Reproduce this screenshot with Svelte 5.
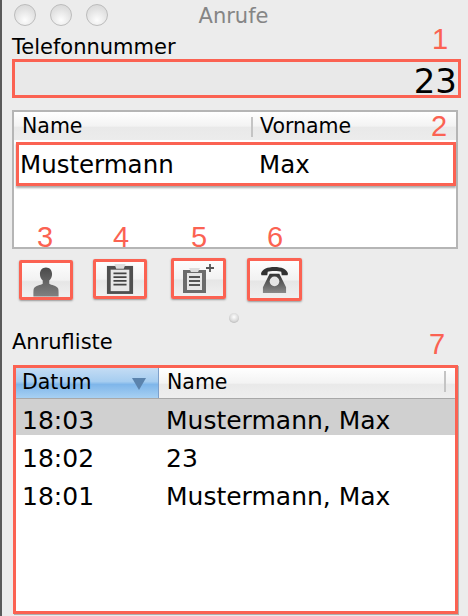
<script>
  const calls = [
    { time: '18:03', name: 'Mustermann, Max', selected: true },
    { time: '18:02', name: '23' },
    { time: '18:01', name: 'Mustermann, Max' }
  ];
</script>

<div class="window">
  <div class="titlebar">
    <div class="lights"><span></span><span></span><span></span></div>
    <div class="title">Anrufe</div>
  </div>

  <div class="label phone-label">Telefonnummer <span class="mark m1">1</span></div>
  <div class="phone">23</div>

  <div class="contacts">
    <div class="head">
      <div class="col-name">Name</div>
      <div class="col-first">Vorname</div>
      <span class="mark m2">2</span>
    </div>
    <div class="contact-row"><span class="cell-name">Mustermann</span><span>Max</span></div>
    <span class="mark m3">3</span>
    <span class="mark m4">4</span>
    <span class="mark m5">5</span>
    <span class="mark m6">6</span>
  </div>

  <div class="tools">
    <button class="b3" aria-label="Kontakt">
      <svg width="28" height="31" viewBox="0 0 30 32">
        <defs>
          <linearGradient id="g1" x1="0" y1="0" x2="0" y2="1"><stop offset="0" stop-color="#4a4a4a"/><stop offset="1" stop-color="#808080"/></linearGradient>
        </defs>
        <path d="M15 1c4 0 6.500 3 6.500 7 0 3-1.200 5.500-3 7v3.500c2 1.500 8 2 9.500 5 .6 1.500.5 5 .5 8.500H1.500c0-3.500-.1-7 .5-8.500 1.500-3 7.500-3.500 9.500-5V15c-1.800-1.500-3-4-3-7 0-4 2.500-7 6.500-7z" fill="url(#g1)"/>
      </svg>
    </button>
    <button class="b4" aria-label="Notiz">
      <svg width="28" height="32" viewBox="0 0 30 32">
        <rect x="1" y="2" width="28" height="30" fill="#4f4f4f"/>
        <path d="M9 0h12l-2 5h-8z" fill="#ddd"/>
        <rect x="5" y="6" width="20" height="23" fill="#e8e8e8"/>
        <path d="M8 10h14M8 14h14M8 18h14M8 22h14" stroke="#444" stroke-width="2"/>
      </svg>
    </button>
    <button class="b5" aria-label="Neue Notiz">
      <svg width="34" height="30" viewBox="0 0 34 30">
        <rect x="1" y="7" width="23" height="23" fill="#6b6b6b"/>
        <path d="M7 5h11l-2 4H9z" fill="#ddd"/>
        <rect x="5" y="10" width="15" height="17" fill="#e6e6e6"/>
        <path d="M7 14h11M7 18h11M7 22h11" stroke="#555" stroke-width="2"/>
        <path d="M28 1v8M24 5h8" stroke="#555" stroke-width="1.800"/>
      </svg>
    </button>
    <button class="b6" aria-label="Anrufen">
      <svg width="29" height="27" viewBox="0 0 30 28">
        <defs>
          <linearGradient id="g2" x1="0" y1="0" x2="0" y2="1"><stop offset="0" stop-color="#333"/><stop offset="1" stop-color="#8a8a8a"/></linearGradient>
        </defs>
        <path d="M1 8C2 3 8 1 15 1s13 2 14 7l-.5 1.500h-6L22 6c-2-1-12-1-14 0l-.5 3.500h-6z" fill="#333"/>
        <path d="M10 8h10l2 4 5 10v6H3v-6l5-10z" fill="url(#g2)"/>
        <circle cx="15" cy="16" r="5" fill="#e4e4e4"/>
      </svg>
    </button>
  </div>

  <div class="splitter"><span></span></div>

  <div class="label list-label">Anrufliste <span class="mark m7">7</span></div>

  <div class="calls">
    <div class="calls-head">
      <div class="sorted">Datum<i></i></div>
      <div class="calls-name">Name</div>
    </div>
    {#each calls as call}
      <div class="call" class:selected={call.selected}>
        <span class="time">{call.time}</span>
        <span>{call.name}</span>
      </div>
    {/each}
  </div>
</div>

<style>
  :global(body) {
    margin: 0;
    background: #ececec;
  }

  .window {
    width: 466px;
    height: 616px;
    box-sizing: border-box;
    border-left: 2px solid #5a5a5a;
    background: #ececec;
    font-family: "DejaVu Sans", sans-serif;
    color: #000;
    overflow: hidden;
    position: relative;
  }

  .titlebar {
    height: 33px;
    position: relative;
    display: flex;
    align-items: center;
    justify-content: center;
  }

  .lights {
    position: absolute;
    left: 12px;
    top: 4px;
    display: flex;
    gap: 14px;
  }

  .lights span {
    width: 20px;
    height: 20px;
    border-radius: 50%;
    border: 1px solid #bcbcbc;
    background: radial-gradient(circle at 50% 75%, #fdfdfd, #e2e2e2 60%, #d4d4d4);
  }

  .title {
    color: #858585;
    font-size: 21px;
    margin-left: -1px;
    margin-top: -1px;
  }

  .label {
    font-size: 21px;
    line-height: 20px;
    margin-left: 10px;
    position: relative;
  }

  .phone-label {
    margin-top: 4px;
  }

  .mark {
    position: absolute;
    color: #fb6252;
    font-family: "Liberation Sans", sans-serif;
    font-size: 29px;
    line-height: 28px;
  }

  .m1 { left: 420px; top: -12px; }
  .m2 { left: 417px; top: 0; }
  .m3 { left: 23px; top: 111px; }
  .m4 { left: 99px; top: 111px; }
  .m5 { left: 177px; top: 111px; }
  .m6 { left: 253px; top: 111px; }
  .m7 { left: 417px; top: -2px; }

  .phone {
    margin: 2px 0 0 10px;
    width: 449px;
    height: 39px;
    box-sizing: border-box;
    border: 3px solid #fb6252;
    background: #e9e9e9;
    text-align: right;
    font-size: 34px;
    line-height: 38px;
    padding-right: 1px;
  }

  .contacts {
    margin: 12px 0 0 10px;
    width: 446px;
    height: 139px;
    box-sizing: border-box;
    border: 2px solid #b5b5b5;
    background: #fff;
    position: relative;
  }

  .head {
    height: 28px;
    display: flex;
    font-size: 20.500px;
    line-height: 28px;
    background: linear-gradient(#fff, #f3f3f3 50%, #e9e9e9 55%, #ececec);
  }

  .col-name {
    width: 239px;
    padding-left: 8px;
    box-sizing: border-box;
    position: relative;
  }

  .col-name::after {
    content: "";
    position: absolute;
    right: 0;
    top: 5px;
    height: 20px;
    width: 2px;
    background: #c4c4c4;
  }

  .col-first {
    padding-left: 7px;
  }

  .contact-row {
    margin: 2px 0 0 2px;
    height: 44px;
    box-sizing: border-box;
    border: 3px solid #fb6252;
    box-shadow: 0 2px 2px #aaa;
    display: flex;
    align-items: center;
    font-size: 24.500px;
    padding-left: 1px;
  }

  .cell-name {
    width: 239px;
  }

  .tools {
    display: flex;
    align-items: flex-start;
    margin: 9px 0 0 17px;
    height: 44px;
  }

  button {
    box-sizing: border-box;
    padding: 0;
    border: 3px solid #fb6252;
    border-radius: 2px;
    background: linear-gradient(#fdfdfd, #f2f2f2 50%, #e6e6e6 55%, #f0f0f0);
    box-shadow: 0 1px 2px #999;
    display: flex;
    align-items: flex-end;
    justify-content: center;
  }

  .b3 { width: 54px; height: 40px; margin-top: 2px; }
  .b4 { width: 54px; height: 40px; margin-left: 20px; margin-top: 1px; align-items: center; }
  .b5 { width: 55px; height: 41px; margin-left: 24px; align-items: center; padding-bottom: 1px; }
  .b6 { width: 55px; height: 43px; margin-left: 21px; align-items: center; }

  .splitter {
    height: 16px;
    display: flex;
    justify-content: center;
    margin-left: -1px;
    margin-top: 11px;
  }

  .splitter span {
    width: 10px;
    height: 10px;
    border-radius: 50%;
    background: radial-gradient(circle at 50% 40%, #fff, #d8d8d8 55%, #9a9a9a);
  }

  .list-label {
    margin-top: 3px;
  }

  .calls {
    margin: 13px 0 0 11px;
    width: 445px;
    height: 249px;
    box-sizing: border-box;
    border: 3px solid #fb6252;
    background: #fff;
    box-shadow: 1px 1px 0 #b0b0b0;
  }

  .calls-head {
    height: 31px;
    display: flex;
    font-size: 20.500px;
    line-height: 28px;
    border-bottom: 1px solid #a8a8a8;
    box-sizing: border-box;
    background: linear-gradient(#fff, #f3f3f3 50%, #e9e9e9 55%, #eeeeee);
  }

  .sorted {
    width: 143px;
    box-sizing: border-box;
    padding-left: 6px;
    position: relative;
    background: linear-gradient(#c4dcf4, #a6cdf0 45%, #7fb6ea 55%, #a7d0f2);
    border-right: 1px solid #7d9fca;
  }

  .sorted i {
    position: absolute;
    right: 12px;
    top: 10px;
    border-left: 7px solid transparent;
    border-right: 7px solid transparent;
    border-top: 12px solid #5b83ad;
  }

  .calls-name {
    flex: 1;
    padding-left: 8px;
    position: relative;
  }

  .calls-name::after {
    content: "";
    position: absolute;
    right: 9px;
    top: 3px;
    height: 21px;
    width: 2px;
    background: #c4c4c4;
  }

  .call {
    display: flex;
    height: 38px;
    box-sizing: border-box;
    padding: 9px 0 0 6px;
    align-items: center;
    font-size: 25px;
  }

  .call.selected {
    background: #d0d0d0;
    height: 36px;
    padding-top: 6px;
  }

  .time {
    width: 144px;
  }
</style>
